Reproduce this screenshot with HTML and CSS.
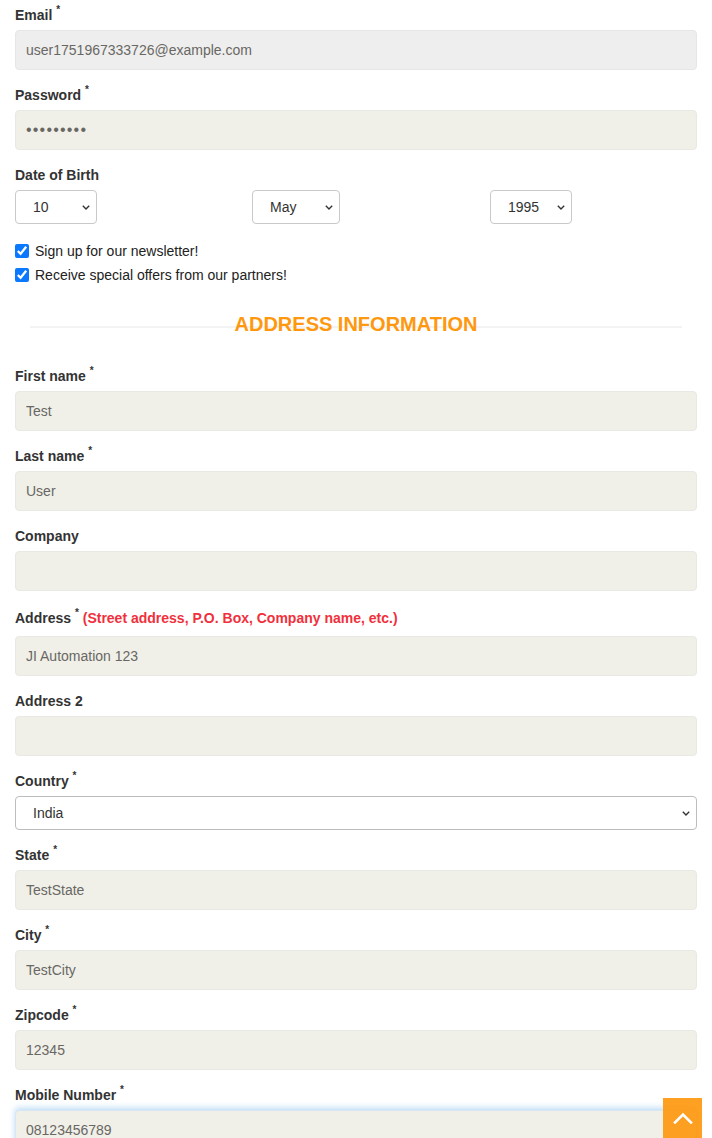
FILE: index.html
```html
<!DOCTYPE html>
<html>
<head>
<meta charset="utf-8">
<link rel="stylesheet" href="styles.css">
</head>
<body>
<form class="form">
  <div class="field">
    <label class="lbl">Email <sup>*</sup></label>
    <input class="inp inp-disabled" type="text" value="user1751967333726@example.com" disabled>
  </div>
  <div class="field">
    <label class="lbl">Password <sup>*</sup></label>
    <input class="inp inp-pass" type="text" value="•••••••••">
  </div>
  <div class="field">
    <label class="lbl">Date of Birth</label>
    <div class="dob">
      <select class="sel sel-day"><option>10</option></select>
      <select class="sel sel-month"><option>May</option></select>
      <select class="sel sel-year"><option>1995</option></select>
    </div>
  </div>
  <div class="checks">
    <label class="check"><input type="checkbox" checked> Sign up for our newsletter!</label>
    <label class="check"><input type="checkbox" checked> Receive special offers from our partners!</label>
  </div>
  <h2 class="title"><span>Address Information</span></h2>
  <div class="field">
    <label class="lbl">First name <sup>*</sup></label>
    <input class="inp" type="text" value="Test">
  </div>
  <div class="field">
    <label class="lbl">Last name <sup>*</sup></label>
    <input class="inp" type="text" value="User">
  </div>
  <div class="field">
    <label class="lbl">Company</label>
    <input class="inp" type="text" value="">
  </div>
  <div class="field">
    <label class="lbl lbl-tall">Address <sup>*</sup> <span class="hint">(Street address, P.O. Box, Company name, etc.)</span></label>
    <input class="inp" type="text" value="JI Automation 123">
  </div>
  <div class="field">
    <label class="lbl">Address 2</label>
    <input class="inp" type="text" value="">
  </div>
  <div class="field">
    <label class="lbl">Country <sup>*</sup></label>
    <select class="sel sel-country"><option>India</option></select>
  </div>
  <div class="field">
    <label class="lbl">State <sup>*</sup></label>
    <input class="inp" type="text" value="TestState">
  </div>
  <div class="field">
    <label class="lbl">City <sup>*</sup></label>
    <input class="inp" type="text" value="TestCity">
  </div>
  <div class="field">
    <label class="lbl">Zipcode <sup>*</sup></label>
    <input class="inp" type="text" value="12345">
  </div>
  <div class="field">
    <label class="lbl">Mobile Number <sup>*</sup></label>
    <input class="inp inp-focus" type="text" value="08123456789">
  </div>
</form>
<a class="scroll-up" href="#">
  <svg width="20" height="12" viewBox="0 0 20 12"><path d="M2 10.5 L10 2.5 L18 10.5" fill="none" stroke="#fff" stroke-width="2.6" stroke-linecap="square"/></svg>
</a>
</body>
</html>
```
FILE: styles.css
```css
html, body {
  margin: 0;
  padding: 0;
  background: #fff;
  overflow: hidden;
}
body {
  font-family: "Liberation Sans", Arial, sans-serif;
  color: #333;
  height: 1138px;
}
.form {
  padding: 5px 15px 0 15px;
}
.field {
  display: flex;
  flex-direction: column;
  margin-bottom: 15px;
}
.lbl {
  font-size: 14px;
  font-weight: bold;
  line-height: 20px;
  margin-bottom: 5px;
  color: #333;
}
.lbl sup {
  font-size: 10px;
  line-height: 0;
  position: relative;
  top: -1px;
}
.lbl-tall {
  padding-top: 2px;
  margin-bottom: 8px;
}
.hint {
  color: #f0303c;
  font-size: 14px;
  font-weight: bold;
}
.inp {
  box-sizing: border-box;
  height: 40px;
  width: 100%;
  margin: 0;
  padding: 0 10px;
  border: 1px solid #e9e9e3;
  border-radius: 4px;
  background: #f0f0e9;
  color: #696763;
  font-family: "Liberation Sans", Arial, sans-serif;
  font-size: 14px;
  outline: none;
}
.inp-disabled {
  background: #eee;
  border-color: #e6e6e6;
  color: #696763;
  -webkit-text-fill-color: #696763;
  opacity: 1;
}
.inp-pass {
  font-size: 16px;
  letter-spacing: 1.2px;
}
.inp-focus {
  box-shadow: 0 -2px 6px rgba(102, 175, 233, 0.45);
  border-color: #d6e6f3;
}
.sel {
  box-sizing: border-box;
  height: 34px;
  margin: 0;
  padding: 0 22px 0 17px;
  border: 1px solid #c9c9c9;
  border-radius: 4px;
  background: #fff url("data:image/svg+xml;utf8,<svg xmlns='http://www.w3.org/2000/svg' width='8' height='5' viewBox='0 0 8 5'><path d='M0.8 0.8 L4 4 L7.2 0.8' fill='none' stroke='%23333' stroke-width='1.4'/></svg>") no-repeat right 6px center;
  -webkit-appearance: none;
  appearance: none;
  font-family: "Liberation Sans", Arial, sans-serif;
  font-size: 14px;
  color: #333;
}
.dob {
  display: grid;
  grid-template-columns: 237px 238px 1fr;
  align-items: start;
}
.sel-day { width: 82px; }
.sel-month { width: 88px; }
.sel-year { width: 82px; }
.sel-country {
  width: 100%;
  border-color: #bdbdbd;
}
.checks {
  display: flex;
  flex-direction: column;
  gap: 6px;
  margin-top: 18px;
}
.check {
  display: flex;
  align-items: center;
  font-size: 14px;
  line-height: 18px;
  color: #222;
}
.check input {
  width: 14px;
  height: 14px;
  margin: 0 6px 0 0;
  accent-color: #0a78ff;
}
.title {
  position: relative;
  margin: 28px 15px 30px 15px;
  text-align: center;
  font-size: 20px;
  line-height: 24px;
  font-weight: bold;
  text-transform: uppercase;
  color: #fe980f;
}
.title::before {
  content: "";
  position: absolute;
  left: 0;
  right: 0;
  top: 14px;
  height: 2px;
  background: #f3f3f3;
}
.title span {
  position: relative;
}
.scroll-up {
  position: fixed;
  left: 663px;
  top: 1098px;
  width: 39px;
  height: 40px;
  background: #fe980f;
  display: flex;
  align-items: center;
  justify-content: center;
  opacity: 0.92;
}
```
